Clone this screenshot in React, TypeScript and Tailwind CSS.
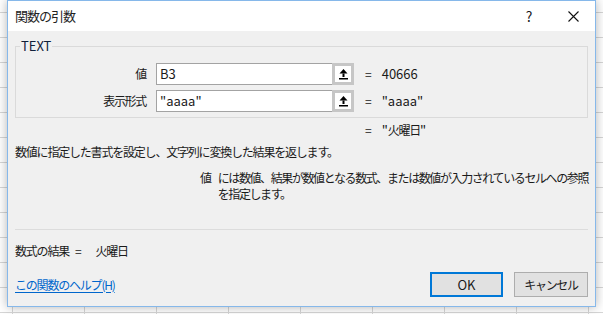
import React from "react"

const font = { fontFamily: '"Noto Sans CJK JP", "Liberation Sans", sans-serif' }

function RefButton() {
  return (
    <div className="w-[22px] h-full border-[3px] border-[#c6c6c6] bg-white flex items-center justify-center">
      <svg width="9" height="11" viewBox="0 0 9 11">
        <polygon points="4.5,0 0.5,4.5 8.5,4.5" fill="#000" />
        <rect x="3.5" y="4.5" width="2" height="3.5" fill="#000" />
        <rect x="0" y="9" width="9" height="1.5" fill="#000" />
      </svg>
    </div>
  )
}

function ArgRow({ label, value, result }: { label: string; value: string; result: string }) {
  return (
    <div className="flex items-center h-[22px]">
      <div className="w-[131px] text-right pr-[1px] tracking-[-1.3px]">{label}</div>
      <div className="ml-[9px] flex h-full">
        <div className="w-[176px] h-full border border-[#a3a3a3] border-r-0 bg-white flex items-center pl-[3px] text-[13px]">{value}</div>
        <RefButton />
      </div>
      <span className="ml-[11px]">=</span>
      <span className="ml-[10px] text-[13px]">{result}</span>
    </div>
  )
}

export default function App() {
  return (
    <div
      className="w-[603px] h-[314px] overflow-hidden bg-white bg-[linear-gradient(#d6d6d6_1px,transparent_1px),linear-gradient(90deg,#d6d6d6_1px,transparent_1px)] bg-[size:72px_25px] bg-[position:12px_12px] text-[12px] text-[#1a1a1a] leading-[16px]"
      style={font}
    >
      <div className="ml-[7px] w-[589px] h-[307px] border border-[#86b8ea] bg-[#f0f0f0] shadow-[0_0_10px_rgba(0,0,0,0.3)] flex flex-col">
        {/* title bar */}
        <div className="h-[30px] bg-white flex items-center">
          <span className="ml-[7px] text-[13px] tracking-[-1px] text-[#222]">関数の引数</span>
          <div className="ml-auto flex items-center h-full">
            <span className="w-[44px] text-center text-[14px]">?</span>
            <div className="w-[44px] flex justify-center">
              <svg width="11" height="11" viewBox="0 0 11 11">
                <path d="M0.5 0.5 L10.5 10.5 M10.5 0.5 L0.5 10.5" stroke="#111" strokeWidth="1.1" />
              </svg>
            </div>
          </div>
        </div>

        {/* body */}
        <div className="flex-1 px-[7px] flex flex-col">
          <fieldset className="mt-[7px] border border-[#dadada] px-0 pt-[9px] pb-[5px]">
            <legend className="ml-[4px] px-[1px] text-[#10203a] text-[13px]">TEXT</legend>
            <div className="flex flex-col gap-[5px]">
              <ArgRow label="値" value="B3" result="40666" />
              <ArgRow label="表示形式" value={'"aaaa"'} result={'"aaaa"'} />
            </div>
          </fieldset>

          <div className="mt-[4px] flex">
            <span className="ml-[350px]">=</span>
            <span className="ml-[10px] text-[13px]">"<span className="text-[12px] tracking-[-1.3px]">火曜日</span>"</span>
          </div>

          <div className="mt-[6px] whitespace-nowrap tracking-[-1.2px]">数値に指定した書式を設定し、文字列に変換した結果を返します。</div>

          <div className="mt-[10px] flex whitespace-nowrap tracking-[-1.4px]">
            <span className="ml-[185px] w-[22px]">値</span>
            <div className="flex flex-col">
              <span>には数値、結果が数値となる数式、または数値が入力されているセルへの参照</span>
              <span>を指定します。</span>
            </div>
          </div>

          <div className="mt-[27px] h-px bg-[#dcdcdc]" />

          <div className="mt-[13px] flex whitespace-nowrap tracking-[-1.2px]">
            <span>数式の結果</span>
            <span className="ml-[6px]">=</span>
            <span className="ml-[15px]">火曜日</span>
          </div>

          <div className="mt-[13px] flex items-center">
            <a className="text-[#0066cc] underline underline-offset-2 cursor-pointer tracking-[-1.2px]">この関数のヘルプ(H)</a>
            <div className="ml-auto flex gap-[11px]">
              <button className="w-[73px] h-[25px] border-2 border-[#0078d7] bg-[#e1e1e1] text-[13px]">OK</button>
              <button className="w-[74px] h-[25px] border border-[#adadad] bg-[#e1e1e1] text-[12px] tracking-[-1.3px]">キャンセル</button>
            </div>
          </div>
        </div>
      </div>
    </div>
  )
}
